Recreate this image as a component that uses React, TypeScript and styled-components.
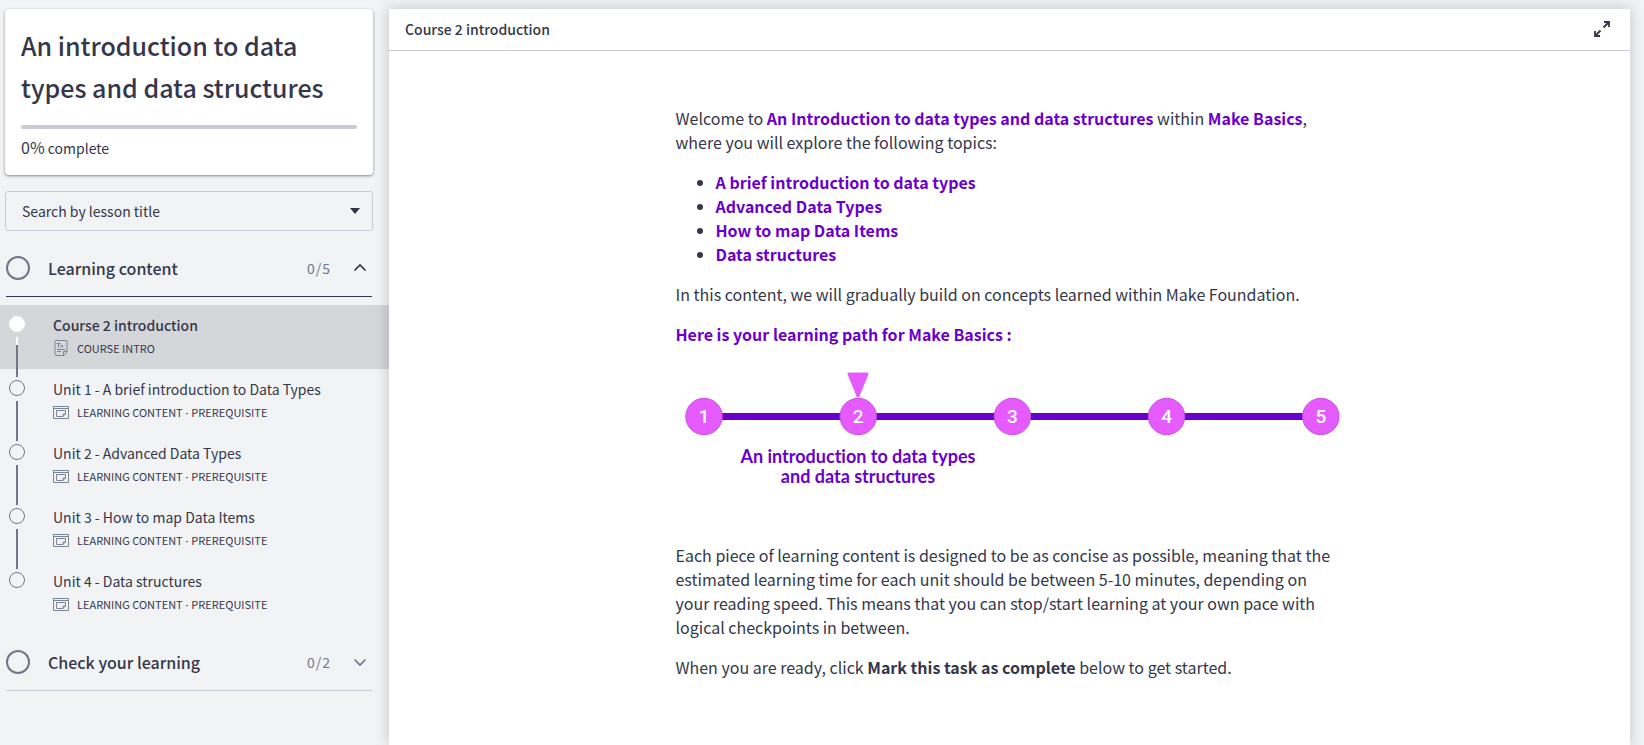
import React from "react";
import styled, { createGlobalStyle, css } from "styled-components";

const ink = "#34374b";
const slate = "#73768b";
const line = "#c8cad5";
const violet = "#6a00cc";
const pink = "#e55bff";

const GlobalStyle = createGlobalStyle`
  * { box-sizing: border-box; }
  body {
    margin: 0;
    background: #f1f3f5;
    color: ${ink};
    font-family: "Noto Sans CJK SC", "Noto Sans", sans-serif;
    font-size: 14px;
    line-height: 24px;
  }
  h1, h2, p, ul { margin: 0; }
`;

const Page = styled.div`
  display: grid;
  grid-template-columns: 389px minmax(0, 1fr);
  min-height: 100vh;
  padding: 9px 14px 0 0;
`;

const Sidebar = styled.aside`
  display: flex;
  flex-direction: column;
`;

const CourseCard = styled.section`
  margin: 0 16px 16px 5px;
  padding: 15px 16px;
  background: #fff;
  border-radius: 4px;
  box-shadow: 0 1px 3px rgba(0, 0, 0, 0.45);
`;

const CourseTitle = styled.h1`
  margin-bottom: 17px;
  font-size: 25px;
  line-height: 42px;
  font-weight: 500;
`;

const Progress = styled.div`
  height: 4px;
  border-radius: 2px;
  background: ${line};
`;

const ProgressText = styled.p`
  padding-top: 6px;
`;

const ProgressValue = styled.span`
  font-size: 16px;
`;

const SearchField = styled.label`
  display: grid;
  align-items: center;
  margin: 0 16px 9px 5px;

  > * { grid-area: 1 / 1; }
`;

const SearchSelect = styled.select`
  width: 100%;
  height: 40px;
  padding: 0 40px 0 16px;
  appearance: none;
  border: 1px solid ${line};
  border-radius: 3px;
  background: transparent;
  color: ${ink};
  font: inherit;
`;

const SelectArrow = styled.svg`
  justify-self: end;
  margin-right: 12px;
  pointer-events: none;
`;

const SectionHeader = styled.button<{ $open?: boolean }>`
  display: flex;
  align-items: center;
  height: 57px;
  margin: 0 17px 0 6px;
  padding: 0 5px 0 0;
  border: 0;
  border-bottom: 1px solid ${(p) => (p.$open ? ink : line)};
  background: none;
  color: ${(p) => (p.$open ? ink : slate)};
  font: inherit;
  text-align: left;
  cursor: pointer;
`;

const SectionRing = styled.span`
  width: 24px;
  height: 24px;
  border: 2px solid ${slate};
  border-radius: 50%;
`;

const SectionName = styled.span`
  flex: 1;
  margin-left: 18px;
  color: ${ink};
  font-size: 16px;
  font-weight: 500;
`;

const SectionCount = styled.span`
  margin-right: 22px;
  color: ${slate};
  letter-spacing: 1px;
`;

const LessonList = styled.ul`
  padding: 8px 0 9px;
  list-style: none;
`;

const LessonLink = styled.a<{ $active?: boolean }>`
  display: flex;
  height: 64px;
  padding-left: 9px;
  color: ${ink};
  text-decoration: none;
  ${(p) => p.$active && css`background: #d5d6da;`}
`;

const Rail = styled.span`
  display: flex;
  flex-direction: column;
  flex: none;
  align-items: center;
  gap: 5px;
  width: 16px;
  padding-top: 11px;
`;

const Dot = styled.span<{ $active?: boolean }>`
  flex: none;
  width: 16px;
  height: 16px;
  border: 1px solid ${(p) => (p.$active ? "#fff" : slate)};
  border-radius: 50%;
  background: ${(p) => (p.$active ? "#fff" : "transparent")};
`;

const Connector = styled.span<{ $active?: boolean }>`
  flex: none;
  width: 2px;
  height: 40px;
  background: ${(p) =>
    p.$active ? `linear-gradient(#fff 8px, ${slate} 8px)` : slate};
`;

const LessonText = styled.span`
  padding: 8px 0 0 28px;
`;

const LessonName = styled.span<{ $active?: boolean }>`
  display: block;
  font-weight: ${(p) => (p.$active ? 500 : 400)};
`;

const LessonMeta = styled.span`
  display: flex;
  align-items: center;
  gap: 8px;
  font-size: 11px;
  line-height: 22px;
`;

const Separator = styled.span`
  font-family: "Noto Sans", sans-serif;
`;

const Panel = styled.main`
  background: #fff;
  box-shadow: 0 0 14px rgba(0, 0, 0, 0.2);
`;

const PanelHeader = styled.header`
  display: flex;
  align-items: center;
  justify-content: space-between;
  height: 42px;
  padding: 0 16px 2px;
  border-bottom: 1px solid ${line};
`;

const PanelTitle = styled.h2`
  font-size: 14px;
  font-weight: 500;
`;

const IconButton = styled.button`
  display: flex;
  padding: 4px;
  border: 0;
  background: none;
  color: ${ink};
  cursor: pointer;
`;

const Article = styled.article`
  display: flex;
  flex-direction: column;
  gap: 16px;
  max-width: 668px;
  margin: 0 auto;
  padding: 55px 0 60px;
  font-size: 16px;
`;

const Topics = styled.ul`
  padding-left: 40px;
`;

const Accent = styled.strong`
  color: ${violet};
`;

const PathDrawing = styled.svg`
  width: 100%;
  height: 165px;
`;

const StepNumber = styled.text`
  fill: #fff;
  font: 500 19px Roboto, sans-serif;
  text-anchor: middle;
`;

const StepCaption = styled.text`
  fill: ${violet};
  font: 700 18px Lato, sans-serif;
  font-variant-ligatures: none;
  text-anchor: middle;
`;

type Kind = "text" | "learning";

const lessons: { name: string; kind: Kind; tags: string[]; active?: boolean }[] = [
  { name: "Course 2 introduction", kind: "text", tags: ["COURSE INTRO"], active: true },
  { name: "Unit 1 - A brief introduction to Data Types", kind: "learning", tags: ["LEARNING CONTENT", "PREREQUISITE"] },
  { name: "Unit 2 - Advanced Data Types", kind: "learning", tags: ["LEARNING CONTENT", "PREREQUISITE"] },
  { name: "Unit 3 - How to map Data Items", kind: "learning", tags: ["LEARNING CONTENT", "PREREQUISITE"] },
  { name: "Unit 4 - Data structures", kind: "learning", tags: ["LEARNING CONTENT", "PREREQUISITE"] },
];

const topics = ["A brief introduction to data types", "Advanced Data Types", "How to map Data Items", "Data structures"];

const KindIcon = ({ kind }: { kind: Kind }) => (
  <svg width="16" height="16" viewBox="0 0 16 16" fill="none" stroke="#7b8494" aria-hidden="true">
    {kind === "text" ? (
      <>
        <path d="M3 .5h10q1 0 1 1V12l-3 3.5H3q-1 0-1-1v-13q0-1 1-1z" />
        <path d="M14 11.500h-3.500v3.500M4 9.500h8M4 11.500h4" />
        <path d="M3.500 3.500h4M5.500 3.500v4M7.500 5l2.500 2.500M10 5L7.500 7.500" />
      </>
    ) : (
      <>
        <path d="M.5 1.500h15v12H.5zM.5 3.500h15" />
        <path d="M3.500 5.500h9v3.500l-2.500 2.500h-6.500zM12.500 9h-2.500v2.500" />
      </>
    )}
  </svg>
);

const Chevron = ({ up }: { up?: boolean }) => (
  <svg width="14" height="14" viewBox="0 0 14 14" fill="none" stroke="currentColor" strokeWidth="1.7" aria-hidden="true">
    <path d={up ? "M1.500 9.500L7 4l5.500 5.500" : "M1.500 4.500L7 10l5.500-5.500"} />
  </svg>
);

const steps = [1, 2, 3, 4, 5];

const LearningPath = () => (
  <PathDrawing viewBox="0 0 668 165" preserveAspectRatio="xMinYMin meet">
    <path d="M28 54.500H644" stroke={violet} strokeWidth="7" />
    {steps.map((n) => (
      <g key={n}>
        <circle cx={28 + (n - 1) * 154.2} cy="54.500" r="18.200" fill={pink} stroke="#c94fe0" />
        <StepNumber x={28 + (n - 1) * 154.2} y="61">{n}</StepNumber>
      </g>
    ))}
    <path d="M173 12h18l-9 22z" fill={pink} stroke={pink} strokeWidth="3" strokeLinejoin="round" />
    <StepCaption x="182" y="101">An introduction to data types</StepCaption>
    <StepCaption x="182" y="121">and data structures</StepCaption>
  </PathDrawing>
);

export default function App() {
  return (
    <>
      <GlobalStyle />
      <Page>
        <Sidebar>
          <CourseCard>
            <CourseTitle>An introduction to data types and data structures</CourseTitle>
            <Progress role="progressbar" aria-label="Course progress" aria-valuenow={0} />
            <ProgressText><ProgressValue>0%</ProgressValue> complete</ProgressText>
          </CourseCard>
          <SearchField>
            <SearchSelect aria-label="Search by lesson title">
              <option>Search by lesson title</option>
            </SearchSelect>
            <SelectArrow width="12" height="6" viewBox="0 0 12 6"><path d="M1 0h10L6 6z" fill={ink} /></SelectArrow>
          </SearchField>
          <SectionHeader $open aria-expanded="true">
            <SectionRing />
            <SectionName>Learning content</SectionName>
            <SectionCount>0/5</SectionCount>
            <Chevron up />
          </SectionHeader>
          <LessonList>
            {lessons.map((l, i) => (
              <li key={l.name}>
                <LessonLink href="#" $active={l.active}>
                  <Rail>
                    <Dot $active={l.active} />
                    {i < lessons.length - 1 && <Connector $active={l.active} />}
                  </Rail>
                  <LessonText>
                    <LessonName $active={l.active}>{l.name}</LessonName>
                    <LessonMeta>
                      <KindIcon kind={l.kind} />
                      <span>
                        {l.tags.map((tag, t) => (
                          <React.Fragment key={tag}>
                            {t > 0 && <Separator> · </Separator>}
                            {tag}
                          </React.Fragment>
                        ))}
                      </span>
                    </LessonMeta>
                  </LessonText>
                </LessonLink>
              </li>
            ))}
          </LessonList>
          <SectionHeader aria-expanded="false">
            <SectionRing />
            <SectionName>Check your learning</SectionName>
            <SectionCount>0/2</SectionCount>
            <Chevron />
          </SectionHeader>
        </Sidebar>
        <Panel>
          <PanelHeader>
            <PanelTitle>Course 2 introduction</PanelTitle>
            <IconButton aria-label="Full screen">
              <svg width="16" height="16" viewBox="0 0 16 16" fill="none" stroke="currentColor" strokeWidth="1.8">
                <path d="M10 1h5v5M15 1L9.500 6.500M1 10v5h5M1 15l5.500-5.500" />
              </svg>
            </IconButton>
          </PanelHeader>
          <Article>
            <p>
              Welcome to <Accent>An Introduction to data types and data structures</Accent> within{" "}
              <Accent>Make Basics</Accent>, where you will explore the following topics:
            </p>
            <Topics>
              {topics.map((t) => <li key={t}><Accent>{t}</Accent></li>)}
            </Topics>
            <p>In this content, we will gradually build on concepts learned within Make Foundation.</p>
            <p><Accent>Here is your learning path for Make Basics :</Accent></p>
            <LearningPath />
            <p>
              Each piece of learning content is designed to be as concise as possible, meaning that the estimated
              learning time for each unit should be between 5-10 minutes, depending on your reading speed. This means
              that you can stop/start learning at your own pace with logical checkpoints in between.
            </p>
            <p>When you are ready, click <strong>Mark this task as complete</strong> below to get started.</p>
          </Article>
        </Panel>
      </Page>
    </>
  );
}
